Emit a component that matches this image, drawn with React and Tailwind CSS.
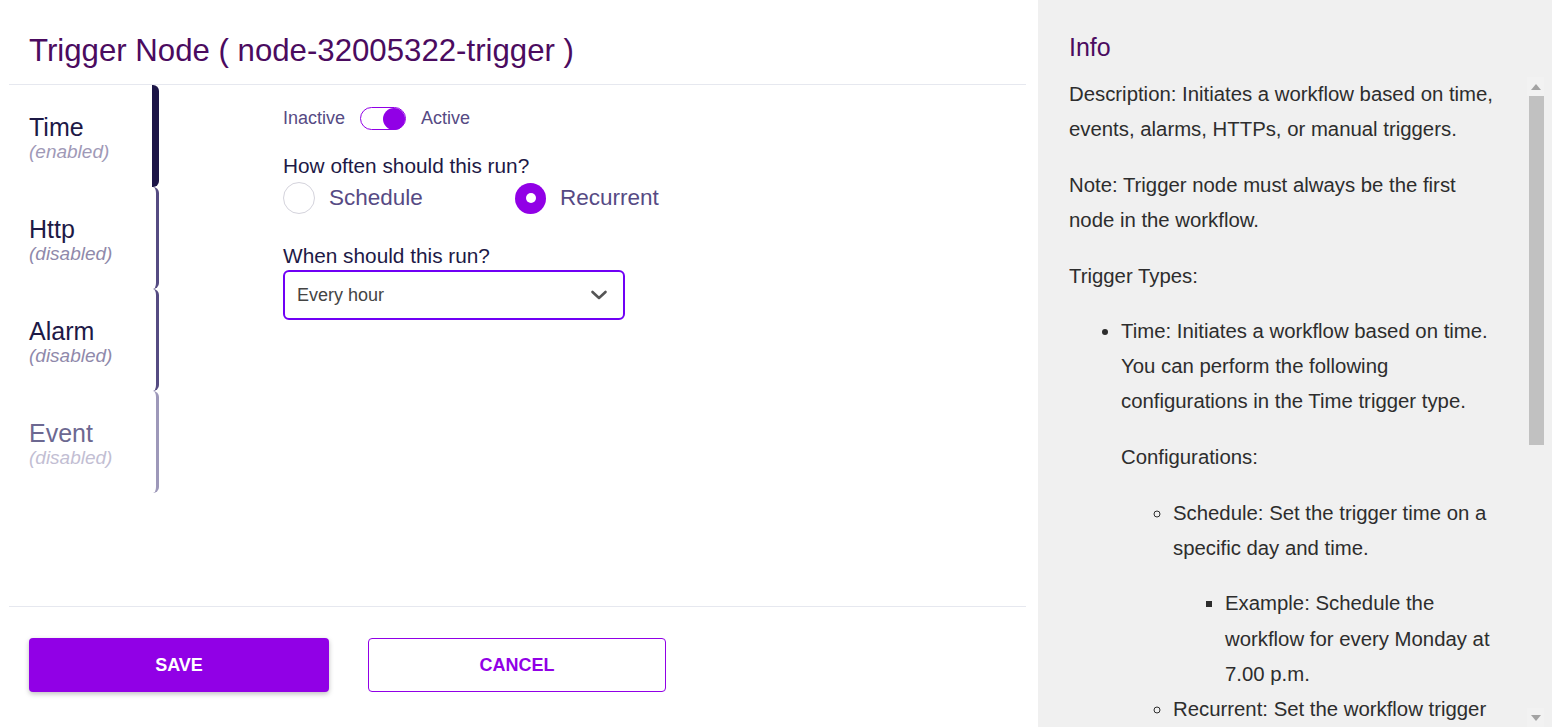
import { useState } from "react";

const tabs = [
  { name: "Time", status: "enabled", active: true },
  { name: "Http", status: "disabled" },
  { name: "Alarm", status: "disabled" },
  { name: "Event", status: "disabled", faded: true },
];

function Tab({ tab }) {
  let bar = "border-r-[3px] border-[#554b82]";
  let title = "text-[#1d1946]";
  let sub = "text-[#8f89ab]";
  if (tab.active) {
    bar = "border-r-[7px] border-[#1c1547]";
    sub = "text-[#9f99b7]";
  }
  if (tab.faded) {
    bar = "border-r-[3px] border-[#9d98b9]";
    title = "text-[#6c6891]";
    sub = "text-[#c2bed3]";
  }
  return (
    <div className={`h-[102px] w-[150px] pl-[20px] pt-[28px] rounded-r-[6px] ${bar}`}>
      <div className={`text-[25px] leading-[28px] ${title}`}>{tab.name}</div>
      <div className={`text-[19px] leading-[22px] italic ${sub}`}>({tab.status})</div>
    </div>
  );
}

function Radio({ checked, label, className = "" }) {
  return (
    <label className={`flex items-center gap-[14px] cursor-pointer ${className}`}>
      {checked ? (
        <span className="w-[31px] h-[31px] rounded-full bg-[#9100e6] flex items-center justify-center">
          <span className="w-[10px] h-[10px] rounded-full bg-white" />
        </span>
      ) : (
        <span className="w-[32px] h-[32px] rounded-full border border-[#d4d3dc] bg-white" />
      )}
      <span className="text-[22.5px] leading-[32px] text-[#564a84]">{label}</span>
    </label>
  );
}

// drawn scrollbar (the headless browser hides native ones)
function ScrollBar() {
  return (
    <div className="w-[17px] flex flex-col bg-[#f0f0f0]">
      <div className="h-[19px] flex items-center justify-center bg-[#f2f2f2]">
        <svg width="10" height="6" viewBox="0 0 10 6">
          <path d="M0 6L5 0l5 6z" fill="#a3a3a3" />
        </svg>
      </div>
      <div className="ml-[2px] h-[349px] bg-[#c1c1c1]" />
      <div className="flex-1" />
      <div className="h-[19px] flex items-center justify-center bg-[#f2f2f2]">
        <svg width="10" height="6" viewBox="0 0 10 6">
          <path d="M0 0l5 6 5-6z" fill="#a3a3a3" />
        </svg>
      </div>
    </div>
  );
}

function App() {
  const [active, setActive] = useState(true);
  const [mode, setMode] = useState("recurrent");

  return (
    <div className="h-screen flex font-['Liberation_Sans',Arial,sans-serif] bg-white overflow-hidden">
      {/* left: form */}
      <div className="w-[1038px] flex flex-col pl-[9px] pr-[12px]">
        <h1 className="pl-[20px] pt-[33px] pb-[15px] text-[31.2px] leading-[36px] text-[#4b0b5f]">
          Trigger Node ( node-32005322-trigger )
        </h1>
        <div className="h-px bg-[#e6e8ef]" />

        <div className="flex-1 flex">
          <div className="flex flex-col">
            {tabs.map((t) => (
              <Tab key={t.name} tab={t} />
            ))}
          </div>

          <div className="pl-[124px] pt-[20px]">
            <div className="flex items-center gap-[15px] text-[18px] text-[#564a84]">
              <span>Inactive</span>
              <button
                onClick={() => setActive((a) => !a)}
                className={`w-[46px] h-[23px] rounded-full border border-[#9100e6] bg-white flex items-center ${
                  active ? "justify-end" : "justify-start"
                }`}
              >
                <span className="w-[22px] h-[22px] rounded-full bg-[#9100e6]" />
              </button>
              <span>Active</span>
            </div>

            <div className="mt-[22px] text-[20.8px] leading-[24px] text-[#1d1946]">
              How often should this run?
            </div>
            <div className="flex mt-[4px]">
              <div onClick={() => setMode("schedule")}>
                <Radio label="Schedule" checked={mode === "schedule"} className="w-[232px]" />
              </div>
              <div onClick={() => setMode("recurrent")}>
                <Radio label="Recurrent" checked={mode === "recurrent"} />
              </div>
            </div>

            <div className="mt-[30px] text-[20.8px] leading-[24px] text-[#1d1946]">
              When should this run?
            </div>
            <div className="mt-[2px] w-[342px] h-[50px] border-2 border-[#7000f5] rounded-[6px] flex items-center justify-between pl-[12px] pr-[15px]">
              <span className="text-[18px] text-[#444444]">Every hour</span>
              <svg width="18" height="12" viewBox="0 0 18 12" fill="none">
                <path d="M2.5 3l6.5 6 6.5-6" stroke="#555" strokeWidth="2.6" strokeLinecap="round" strokeLinejoin="round" />
              </svg>
            </div>
          </div>
        </div>

        <div className="h-px bg-[#e6e8ef]" />
        <div className="flex gap-[39px] pl-[20px] pt-[31px] pb-[35px]">
          <button className="w-[300px] h-[54px] rounded-[4px] bg-[#9100e6] text-white font-bold text-[18px] shadow-[0_2px_5px_rgba(0,0,0,0.25)]">
            SAVE
          </button>
          <button className="w-[298px] h-[54px] rounded-[4px] border border-[#9100e6] bg-white text-[#9100e6] font-bold text-[18px]">
            CANCEL
          </button>
        </div>
      </div>

      {/* right: info */}
      <div className="flex-1 min-w-0 bg-[#f0f0f0] flex flex-col pl-[31px] pr-[8px] pt-[32px]">
        <h2 className="text-[25px] leading-[30px] text-[#4b0b5f] mb-[15px]">Info</h2>
        <div className="flex-1 min-h-0 flex">
          <div className="flex-1 min-w-0 overflow-hidden pr-[22px] text-[20.35px] leading-[35.2px] text-[#2d2d2d]">
            <p>Description: Initiates a workflow based on time, events, alarms, HTTPs, or manual triggers.</p>
            <p className="mt-[1em]">Note: Trigger node must always be the first node in the workflow.</p>
            <p className="mt-[1em]">Trigger Types:</p>
            <ul className="list-disc pl-[52px] mt-[1em]">
              <li>
                <p>Time: Initiates a workflow based on time. You can perform the following configurations in the Time trigger type.</p>
                <p className="mt-[1em]">Configurations:</p>
                <ul className="list-[circle] pl-[52px] mt-[1em]">
                  <li>
                    Schedule: Set the trigger time on a specific day and time.
                    <ul className="list-[square] pl-[52px] mt-[1em]">
                      <li>Example: Schedule the workflow for every Monday at 7.00 p.m.</li>
                    </ul>
                  </li>
                  <li>
                    Recurrent: Set the workflow trigger to run at regular intervals.
                    <ul className="list-[square] pl-[52px] mt-[1em]">
                      <li>Example: Run the workflow every hour.</li>
                    </ul>
                  </li>
                </ul>
              </li>
              <li className="mt-[1em]">Http: Initiates a workflow when an HTTP request is received.</li>
              <li className="mt-[1em]">Alarm: Initiates a workflow when an alarm is raised.</li>
              <li className="mt-[1em]">Event: Initiates a workflow when a specific event occurs.</li>
            </ul>
          </div>
          <ScrollBar />
        </div>
      </div>
    </div>
  );
}

export default App;
